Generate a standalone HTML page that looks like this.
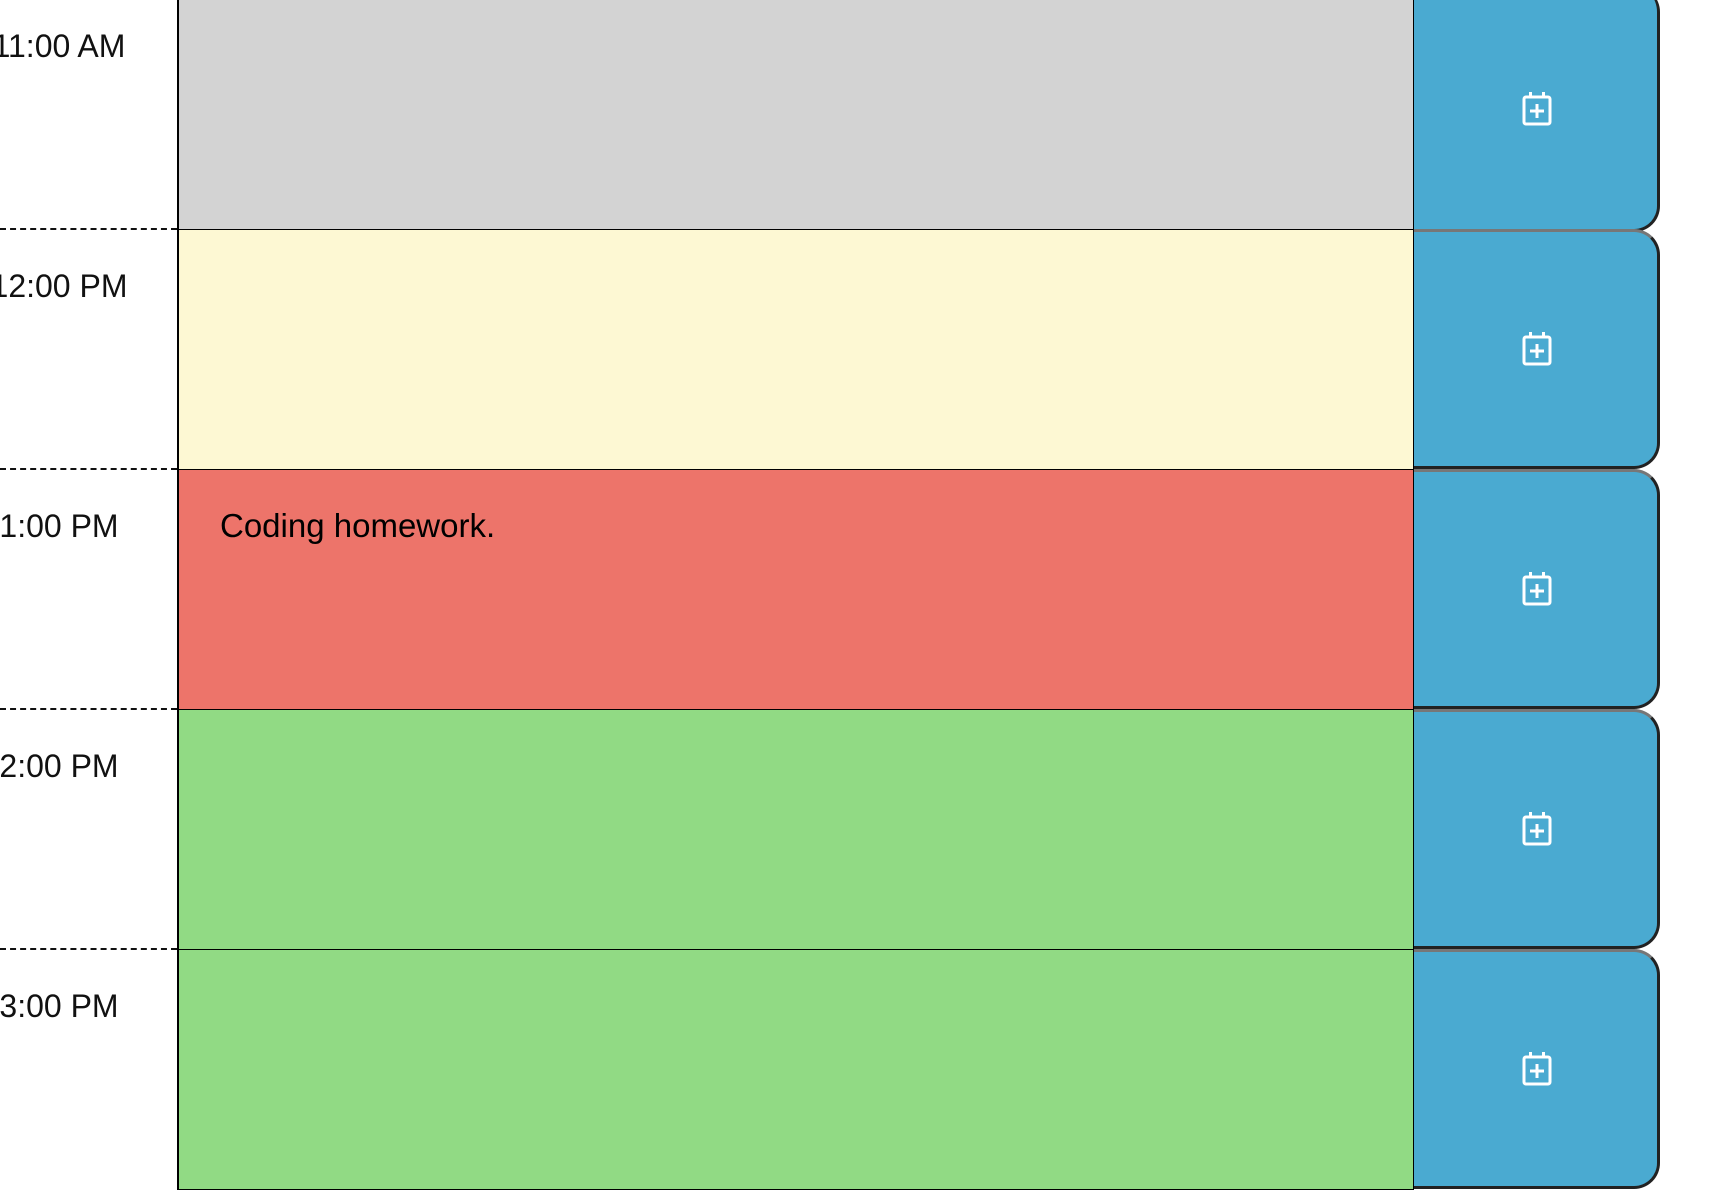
<!DOCTYPE html>
<html><head><style>
body{margin:0;width:1730px;height:1144px;overflow:hidden;background:#fff;position:relative;font-family:"Liberation Sans",sans-serif}
.h{position:absolute;left:-41px;width:200px;text-align:center;font-size:32px;color:#111}
.d{position:absolute;left:0;width:177px;border-top:2px dashed #111}
.t{position:absolute;left:177px;width:1237px;height:238px;border:1px solid #000;border-left:2px solid #000;box-sizing:border-box}
.t span{position:absolute;left:41px;top:37px;font-size:33px;color:#000}
.b{position:absolute;left:1414px;width:246px;height:240px;box-sizing:border-box;background:#4aaad1;border-right:3px solid #222;border-bottom:3px solid #222;border-top:3px solid #777;border-radius:0 26px 26px 0}
.b svg{position:absolute;left:108px;top:100px}
</style></head><body>
<div class="t" style="top:-10px;height:240px;background:#d3d3d3"></div>
<div class="t" style="top:229px;height:241px;background:#fdf8d3"></div>
<div class="t" style="top:469px;height:241px;background:#ed746a"><span>Coding homework.</span></div>
<div class="t" style="top:709px;height:241px;background:#91da84"></div>
<div class="t" style="top:949px;height:241px;background:#91da84"></div>

<div class="d" style="top:228px"></div>
<div class="d" style="top:468px"></div>
<div class="d" style="top:708px"></div>
<div class="d" style="top:948px"></div>

<div class="h" style="top:28px">11:00 AM</div>
<div class="h" style="top:268px">12:00 PM</div>
<div class="h" style="top:508px">1:00 PM</div>
<div class="h" style="top:748px">2:00 PM</div>
<div class="h" style="top:988px">3:00 PM</div>

<div class="b" style="top:-14px;border-top:none;height:246px"><svg width="30" height="34" viewBox="0 0 30 34" style="top:106px"><rect x="2" y="5" width="26" height="27" rx="2" fill="none" stroke="#fff" stroke-width="3"/><rect x="7" y="0" width="3" height="6" fill="#fff"/><rect x="20" y="0" width="3" height="6" fill="#fff"/><path d="M15 12v14M8 19h14" stroke="#fff" stroke-width="3"/></svg></div>
<div class="b" style="top:229px"><svg width="30" height="34" viewBox="0 0 30 34"><rect x="2" y="5" width="26" height="27" rx="2" fill="none" stroke="#fff" stroke-width="3"/><rect x="7" y="0" width="3" height="6" fill="#fff"/><rect x="20" y="0" width="3" height="6" fill="#fff"/><path d="M15 12v14M8 19h14" stroke="#fff" stroke-width="3"/></svg></div>
<div class="b" style="top:469px"><svg width="30" height="34" viewBox="0 0 30 34"><rect x="2" y="5" width="26" height="27" rx="2" fill="none" stroke="#fff" stroke-width="3"/><rect x="7" y="0" width="3" height="6" fill="#fff"/><rect x="20" y="0" width="3" height="6" fill="#fff"/><path d="M15 12v14M8 19h14" stroke="#fff" stroke-width="3"/></svg></div>
<div class="b" style="top:709px"><svg width="30" height="34" viewBox="0 0 30 34"><rect x="2" y="5" width="26" height="27" rx="2" fill="none" stroke="#fff" stroke-width="3"/><rect x="7" y="0" width="3" height="6" fill="#fff"/><rect x="20" y="0" width="3" height="6" fill="#fff"/><path d="M15 12v14M8 19h14" stroke="#fff" stroke-width="3"/></svg></div>
<div class="b" style="top:949px"><svg width="30" height="34" viewBox="0 0 30 34"><rect x="2" y="5" width="26" height="27" rx="2" fill="none" stroke="#fff" stroke-width="3"/><rect x="7" y="0" width="3" height="6" fill="#fff"/><rect x="20" y="0" width="3" height="6" fill="#fff"/><path d="M15 12v14M8 19h14" stroke="#fff" stroke-width="3"/></svg></div>
</body></html>
